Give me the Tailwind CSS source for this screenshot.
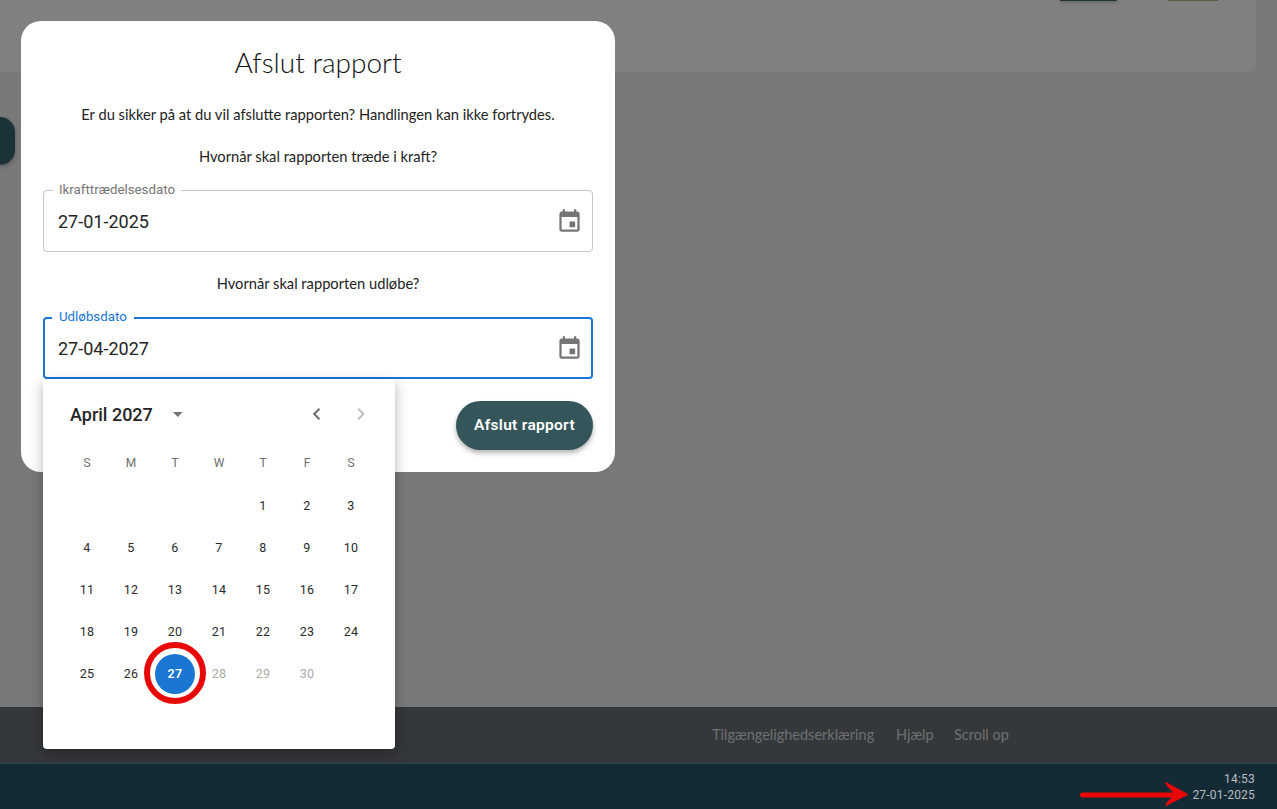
<!DOCTYPE html>
<html lang="da">
<head>
    <meta charset="UTF-8">
    <meta name="viewport" content="width=device-width, initial-scale=1.0">
    <title>Afslut rapport</title>
    <script src="https://cdn.jsdelivr.net/npm/@tailwindcss/browser@4"></script>
</head>
<body class="relative h-[809px] w-[1277px] overflow-hidden flex flex-col bg-[#797979] font-['Roboto',sans-serif]">

    <!-- Page behind the dialog -->
    <main class="relative h-[707px] shrink-0">
        <div class="relative h-[72px] mr-[21px] bg-[#808080] rounded-br-[10px]">
            <div class="absolute top-0 left-[1060px] w-[57px] h-px bg-[#1c3338] shadow-[0_1px_3px_rgba(0,0,0,0.5)] rounded-b"></div>
            <div class="absolute top-0 left-[1168px] w-[50px] h-px bg-[#5c5a45]"></div>
        </div>
        <div class="absolute left-0 top-[117px] w-[15px] h-[48px] bg-[#1b3338] rounded-r-[16px] shadow-[0_2px_4px_rgba(0,0,0,0.3)]"></div>
    </main>

    <footer class="h-[56px] shrink-0 bg-[#35383b] flex items-center pb-[1px] pl-[712px] gap-[22px] text-[14.5px] text-[#6f7070] font-['Lato',sans-serif]">
        <span class="w-[162px] whitespace-nowrap">Tilgængelighedserklæring</span>
        <span class="w-[36px] whitespace-nowrap">Hjælp</span>
        <span class="whitespace-nowrap">Scroll op</span>
    </footer>

    <div class="h-[46px] shrink-0 bg-[#142a35] border-t border-[#2e444e] flex flex-col items-end justify-center pr-[22px] text-[12px] leading-[16px] text-[#b9bec0] tracking-[0.2px]">
        <span>14:53</span>
        <span>27-01-2025</span>
    </div>

    <!-- Dialog -->
    <div class="absolute left-[21px] top-[21px] w-[594px] h-[451px] bg-white rounded-[20px] px-[22px] text-[#222222]">
        <h2 class="mt-[20px] h-[42px] leading-[42px] text-center text-[28px] font-light font-['Lato',sans-serif] text-[#111111]">Afslut rapport</h2>
        <p class="mt-[19px] h-[24px] leading-[24px] text-center text-[14.7px] font-['Lato',sans-serif] text-[#222222]">Er du sikker på at du vil afslutte rapporten? Handlingen kan ikke fortrydes.</p>
        <p class="mt-[18px] h-[24px] leading-[24px] text-center text-[14.7px] font-['Lato',sans-serif] text-[#222222]">Hvornår skal rapporten træde i kraft?</p>

        <div class="relative mt-[22px] h-[62px] border border-[#c4c4c4] rounded flex items-center justify-between pl-[14px] pr-[9px]">
            <span class="absolute -top-[8px] left-[9px] px-[6px] bg-white text-[13.3px] leading-[14px] text-[#757575]">Ikrafttrædelsesdato</span>
            <span class="text-[18px] text-[#242424]">27-01-2025</span>
            <svg class="w-[27px] h-[27px]" viewBox="0 0 24 24" fill="#757575"><path d="M17 12h-5v5h5v-5zM16 1v2H8V1H6v2H5c-1.11 0-1.99.9-1.99 2L3 19c0 1.1.89 2 2 2h14c1.1 0 2-.9 2-2V5c0-1.1-.9-2-2-2h-1V1h-2zm3 18H5V8h14v11z"/></svg>
        </div>

        <p class="mt-[19px] h-[24px] leading-[24px] text-center text-[14.7px] font-['Lato',sans-serif] text-[#222222]">Hvornår skal rapporten udløbe?</p>

        <div class="relative mt-[22px] h-[62px] border-2 border-[#1976d2] rounded flex items-center justify-between pl-[13px] pr-[8px]">
            <span class="absolute -top-[9px] left-[7px] px-[7px] bg-white text-[13.3px] leading-[14px] text-[#1976d2]">Udløbsdato</span>
            <span class="text-[18px] text-[#242424]">27-04-2027</span>
            <svg class="w-[27px] h-[27px]" viewBox="0 0 24 24" fill="#757575"><path d="M17 12h-5v5h5v-5zM16 1v2H8V1H6v2H5c-1.11 0-1.99.9-1.99 2L3 19c0 1.1.89 2 2 2h14c1.1 0 2-.9 2-2V5c0-1.1-.9-2-2-2h-1V1h-2zm3 18H5V8h14v11z"/></svg>
        </div>

        <div class="mt-[22px] flex justify-end">
            <button class="w-[137px] h-[49px] pt-[1px] rounded-[25px] bg-[#34565b] text-white text-[15.5px] font-semibold tracking-[0.3px] shadow-[0_3px_5px_rgba(0,0,0,0.3)]">Afslut rapport</button>
        </div>
    </div>

    <!-- Date picker popup -->
    <div class="absolute left-[43px] top-[379px] w-[352px] h-[370px] bg-white rounded-b shadow-[0_5px_14px_rgba(0,0,0,0.3)] px-[22px]">
        <div class="h-[70px] flex items-center pl-[5px]">
            <span class="text-[18px] font-medium text-[#262626] w-[100px]">April 2027</span>
            <svg class="w-[24px] h-[24px] -ml-[2px]" viewBox="0 0 24 24" fill="#757575"><path d="M7 10l5 5 5-5z"/></svg>
            <svg class="w-[24px] h-[24px] ml-[115px]" viewBox="0 0 24 24" fill="#6b6b6b"><path d="M15.41 7.41 14 6l-6 6 6 6 1.41-1.41L10.83 12z"/></svg>
            <svg class="w-[24px] h-[24px] ml-[21px]" viewBox="0 0 24 24" fill="#bdbdbd"><path d="M10 6 8.59 7.41 13.17 12l-4.58 4.59L10 18l6-6z"/></svg>
        </div>

        <div class="grid grid-cols-[repeat(7,44px)] h-[27px] items-center text-center text-[12px] text-[#6e6e6e]">
            <span>S</span><span>M</span><span>T</span><span>W</span><span>T</span><span>F</span><span>S</span>
        </div>

        <div class="mt-[9px] grid grid-cols-[repeat(7,44px)] auto-rows-[42px] items-center justify-items-center text-[12.5px] tracking-[0.3px] text-[#2b2b2b]">
            <span></span><span></span><span></span><span></span><span class="pt-[1px]">1</span><span class="pt-[1px]">2</span><span class="pt-[1px]">3</span>
            <span>4</span><span>5</span><span>6</span><span>7</span><span>8</span><span>9</span><span>10</span>
            <span>11</span><span>12</span><span>13</span><span>14</span><span>15</span><span>16</span><span>17</span>
            <span>18</span><span>19</span><span>20</span><span>21</span><span>22</span><span>23</span><span>24</span>
            <span>25</span><span>26</span>
            <span class="w-[40px] h-[40px] rounded-full bg-[#1976d2] text-white font-semibold flex items-center justify-center">27</span>
            <span class="text-[#ababab]">28</span><span class="text-[#ababab]">29</span><span class="text-[#ababab]">30</span><span></span>
        </div>
    </div>

    <!-- Red annotations -->
    <div class="absolute left-[144px] top-[642px] w-[62px] h-[62px] rounded-full border-[6px] border-[#e80808]"></div>
    <svg class="absolute left-[1075px] top-[780px] w-[115px] h-[30px]" viewBox="0 0 115 30">
        <path d="M7.5 15H100" stroke="#e80808" stroke-width="5" stroke-linecap="round"/>
        <path d="M91 3 112 14.5 91 25 94 21 101 14.5 94 7Z" fill="#e80808" stroke="#e80808" stroke-width="1.5" stroke-linejoin="round"/>
    </svg>
</body>
</html>
